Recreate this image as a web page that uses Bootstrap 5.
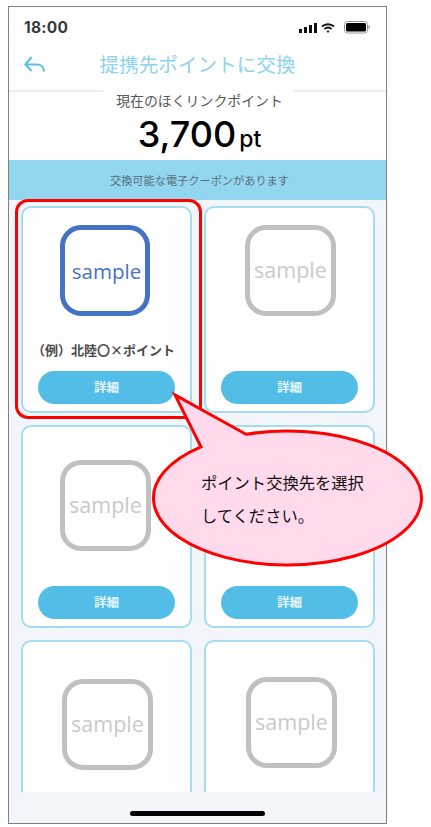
<!DOCTYPE html>
<html lang="ja">
<head>
    <meta charset="UTF-8">
    <meta name="viewport" content="width=device-width, initial-scale=1.0">
    <title>提携先ポイントに交換</title>
    <link href="https://cdn.jsdelivr.net/npm/bootstrap@5.3.0/dist/css/bootstrap.min.css" rel="stylesheet">
    <style>
        body {
            background: #fff;
            font-family: "Noto Sans CJK JP", sans-serif;
        }
        .stage {
            position: relative;
            width: 431px;
            height: 827px;
            padding: 6px 0 0 8px;
            overflow: hidden;
        }
        .phone {
            width: 379px;
            height: 818px;
            border: 1px solid #808080;
            background: #f2f5fa;
        }
        .top-area {
            background: #fff;
        }
        .status-line {
            height: 37px;
            padding: 4px 16px 0 15px;
        }
        .status-time {
            font: 700 15.5px/1 Inter, "Liberation Sans", sans-serif;
            color: #383838;
            letter-spacing: .3px;
        }
        .title-line {
            height: 48px;
            border-bottom: 2px solid #eceef0;
        }
        .back-icon {
            position: absolute;
            left: 24px;
            top: 55px;
        }
        .page-title {
            font-size: 19.6px;
            line-height: 1;
            color: #8dd3f0;
            padding-bottom: 6px;
        }
        .balance {
            width: 190px;
            height: 70px;
            margin-top: -2px;
            background: #fff;
            position: relative;
            padding-left: 4px;
        }
        .balance-label {
            font-size: 13.9px;
            line-height: 1;
            color: #555;
            padding-top: 4px;
        }
        .balance-value {
            font: 500 36px/1 Inter, "Liberation Sans", sans-serif;
            color: #000;
            padding-top: 8px;
            white-space: nowrap;
        }
        .balance-value span {
            font-size: 23px;
            margin-left: 3px;
        }
        .info-band {
            height: 40px;
            background: #93d6f0;
            color: #56707c;
            font-size: 11.2px;
            padding-left: 4px;
        }
        .coupon-list {
            height: 592px;
            overflow: hidden;
            padding: 6px 11px 0 12px;
            grid-template-columns: 171px 171px;
            column-gap: 12px;
            row-gap: 12px;
            align-content: start;
        }
        .coupon-item {
            height: 207px;
            border: 2px solid #a6dcf2;
            border-radius: 10px;
            background: #fff;
            padding: 0 15px 7px;
        }
        .coupon-item.lower {
            height: 203px;
        }
        .coupon-item.last {
            height: 215px;
        }
        .logo-box {
            width: 91px;
            height: 91px;
            border: 5px solid #c0c0c0;
            border-radius: 21px;
            margin-top: 17px;
            color: #c9c9c9;
            font: 400 21.5px/1 "Open Sans", sans-serif;
            padding-bottom: 2px;
        }
        .logo-box.picked {
            width: 90px;
            margin-right: 3px;
            border-color: #4472c4;
            color: #4472c4;
            font-size: 20.5px;
            padding-bottom: 0;
            padding-top: 2px;
            padding-left: 3px;
        }
        .lower .logo-box {
            margin-top: 33px;
        }
        .last .logo-box {
            margin-top: 37px;
        }
        .last .logo-box.upper-logo {
            margin-top: 35px;
        }
        .logo-box.nudge-left {
            margin-right: 2px;
        }
        .logo-box.nudge-right {
            margin-left: 2px;
        }
        .logo-box.nudge-right-more {
            margin-left: 4px;
        }
        .coupon-name {
            font-size: 13px;
            font-weight: 700;
            color: #4a4a4a;
            line-height: 1;
            margin-top: 27px;
            margin-right: 6px;
            white-space: nowrap;
        }
        .detail-btn {
            height: 33px;
            border: 0;
            border-radius: 17px;
            background: #52bde6;
            color: #e6f6fc;
            font-size: 12.5px;
            font-weight: 700;
            margin-top: auto;
        }
        .home-bar {
            height: 30px;
        }
        .home-bar i {
            display: block;
            width: 135px;
            height: 5px;
            border-radius: 3px;
            background: #000;
            margin: 19px auto 0;
        }
        .pick-frame {
            position: absolute;
            left: 15px;
            top: 199px;
            width: 187px;
            height: 220px;
            border: 3px solid #f00;
            border-radius: 13px;
        }
        .balloon {
            position: absolute;
            left: 0;
            top: 0;
        }
        .balloon-text {
            position: absolute;
            left: 201px;
            top: 466px;
            font-size: 16.3px;
            line-height: 33px;
            color: #111;
            white-space: nowrap;
        }
    </style>
</head>
<body class="m-0">
    <div class="stage">
        <div class="phone d-flex flex-column">
            <div class="top-area">
                <div class="status-line d-flex justify-content-between align-items-center">
                    <span class="status-time">18:00</span>
                    <svg width="72" height="16" viewBox="0 0 72 16">
                        <rect x="1" y="9" width="3" height="4" fill="#111"/>
                        <rect x="6" y="7" width="3" height="6" fill="#111"/>
                        <rect x="11" y="5" width="3" height="8" fill="#111"/>
                        <rect x="16" y="3" width="3" height="10" fill="#111"/>
                        <path d="M24 6.5a9 9 0 0 1 12 0M26.500 9a5.400 5.400 0 0 1 7 0" fill="none" stroke="#111" stroke-width="1.9"/>
                        <path d="M28.500 11a2.400 2.400 0 0 1 3 0L30 13z" fill="#111"/>
                        <rect x="46.500" y="1.500" width="23" height="11.500" rx="3" fill="none" stroke="#999"/>
                        <rect x="48" y="3" width="20" height="8.500" rx="1.500" fill="#000"/>
                        <rect x="70.500" y="5.500" width="1.200" height="3.500" fill="#999"/>
                    </svg>
                </div>
                <div class="title-line d-flex align-items-center justify-content-center">
                    <div class="page-title">提携先ポイントに交換</div>
                </div>
                <div class="balance mx-auto text-center">
                    <div class="balance-label">現在のほくリンクポイント</div>
                    <div class="balance-value">3,700<span>pt</span></div>
                </div>
            </div>
            <div class="info-band d-flex align-items-center justify-content-center">交換可能な電子クーポンがあります</div>
            <div class="coupon-list d-grid">
                <div class="coupon-item d-flex flex-column align-items-center">
                    <div class="logo-box picked d-flex align-items-center justify-content-center">sample</div>
                    <div class="coupon-name">（例）北陸〇×ポイント</div>
                    <button class="detail-btn w-100">詳細</button>
                </div>
                <div class="coupon-item d-flex flex-column align-items-center">
                    <div class="logo-box nudge-right d-flex align-items-center justify-content-center">sample</div>
                    <button class="detail-btn w-100">詳細</button>
                </div>
                <div class="coupon-item lower d-flex flex-column align-items-center">
                    <div class="logo-box nudge-left d-flex align-items-center justify-content-center">sample</div>
                    <button class="detail-btn w-100">詳細</button>
                </div>
                <div class="coupon-item lower d-flex flex-column align-items-center">
                    <div class="logo-box"></div>
                    <button class="detail-btn w-100">詳細</button>
                </div>
                <div class="coupon-item last d-flex flex-column align-items-center">
                    <div class="logo-box nudge-right d-flex align-items-center justify-content-center">sample</div>
                </div>
                <div class="coupon-item last d-flex flex-column align-items-center">
                    <div class="logo-box upper-logo nudge-right-more d-flex align-items-center justify-content-center">sample</div>
                </div>
            </div>
            <div class="home-bar"><i></i></div>
        </div>

        <svg class="back-icon" width="22" height="18" viewBox="0 0 22 18">
            <path d="M7.500 2L1.500 9.500L7.500 16M1.500 9.500H12.500C17 9.500 20 12.500 20 16.500" fill="none" stroke="#5cbfe8" stroke-width="2.200"/>
        </svg>

        <div class="pick-frame"></div>
        <svg class="balloon" width="431" height="827" viewBox="0 0 431 827">
            <path d="M201 446.830L175 395L246 434.300A134 67 0 1 1 201 446.830Z" fill="#ffd9ec" stroke="#f00" stroke-width="3"/>
        </svg>
        <div class="balloon-text">ポイント交換先を選択<br>してください。</div>
    </div>
    <script src="https://cdn.jsdelivr.net/npm/bootstrap@5.3.0/dist/js/bootstrap.bundle.min.js"></script>
</body>
</html>
